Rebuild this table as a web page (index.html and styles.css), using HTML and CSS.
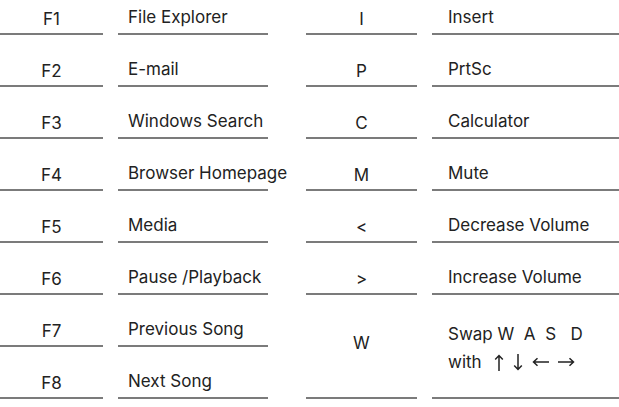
FILE: index.html
```html
<!DOCTYPE html>
<html>
<head>
<meta charset="utf-8">
<link rel="stylesheet" href="styles.css">
</head>
<body>
<div class="table">
  <div class="key k1">F1</div><div class="desc d1">File Explorer</div><div class="key k2">I</div><div class="desc d2">Insert</div>
  <div class="key k1">F2</div><div class="desc d1">E-mail</div><div class="key k2">P</div><div class="desc d2">PrtSc</div>
  <div class="key k1">F3</div><div class="desc d1">Windows Search</div><div class="key k2">C</div><div class="desc d2">Calculator</div>
  <div class="key k1">F4</div><div class="desc d1">Browser Homepage</div><div class="key k2">M</div><div class="desc d2">Mute</div>
  <div class="key k1">F5</div><div class="desc d1">Media</div><div class="key k2">&lt;</div><div class="desc d2">Decrease Volume</div>
  <div class="key k1">F6</div><div class="desc d1">Pause /Playback</div><div class="key k2">&gt;</div><div class="desc d2">Increase Volume</div>
  <div class="key k1">F7</div><div class="desc d1">Previous Song</div><div class="key k2 tall">W</div><div class="desc d2 tall swap"><span>Swap W&nbsp; A&nbsp; S&nbsp;&nbsp; D</span><span>with<svg class="arr v first" width="10" height="17" viewBox="0 0 10 17"><path d="M5 1.5V17M1.2 5.5L5 1.5L8.8 5.5"/></svg><svg class="arr v" width="10" height="17" viewBox="0 0 10 17"><path d="M5 0V15.5M1.2 11.5L5 15.5L8.8 11.5"/></svg><svg class="arr h" width="17" height="10" viewBox="0 0 17 10"><path d="M1.5 5H17M5.5 1.2L1.5 5L5.5 8.8"/></svg><svg class="arr h" width="17" height="10" viewBox="0 0 17 10"><path d="M0 5H15.5M11.5 1.2L15.5 5L11.5 8.8"/></svg></span></div>
  <div class="key k1">F8</div><div class="desc d1">Next Song</div>
</div>
</body>
</html>
```
FILE: styles.css
```css
html, body {
  margin: 0;
  padding: 0;
  background: #ffffff;
  overflow: hidden;
}
body {
  font-family: Inter, "Noto Sans", sans-serif;
  color: #222222;
  font-size: 17px;
}
.table {
  display: grid;
  grid-template-columns: 103px 150px 8px 111px 200px;
  grid-auto-rows: 52px;
  column-gap: 15px;
  margin-top: -17px;
}
.key, .desc {
  border-bottom: 2px solid #7b7b7b;
  display: flex;
  align-items: flex-end;
  line-height: 20px;
  white-space: nowrap;
}
.key {
  justify-content: center;
  padding-bottom: 4px;
}
.desc {
  padding-bottom: 6px;
}
.k1 { grid-column: 1; }
.d1 { grid-column: 2; padding-left: 10px; }
.k2 { grid-column: 4; }
.d2 { grid-column: 5; padding-left: 16px; }
.tall {
  grid-row: span 2;
  align-items: center;
}
.key.tall { padding-top: 0; padding-bottom: 6px; }
.swap {
  flex-direction: column;
  align-items: flex-start;
  justify-content: center;
  line-height: 28px;
  padding-top: 4px;
  padding-bottom: 0;
}
.arr {
  fill: none;
  stroke: #222222;
  stroke-width: 1.5;
  margin-left: 9px;
}
.arr.first { margin-left: 12px; }
.arr.v { vertical-align: -3px; }
.arr.h { vertical-align: 1px; }
```
